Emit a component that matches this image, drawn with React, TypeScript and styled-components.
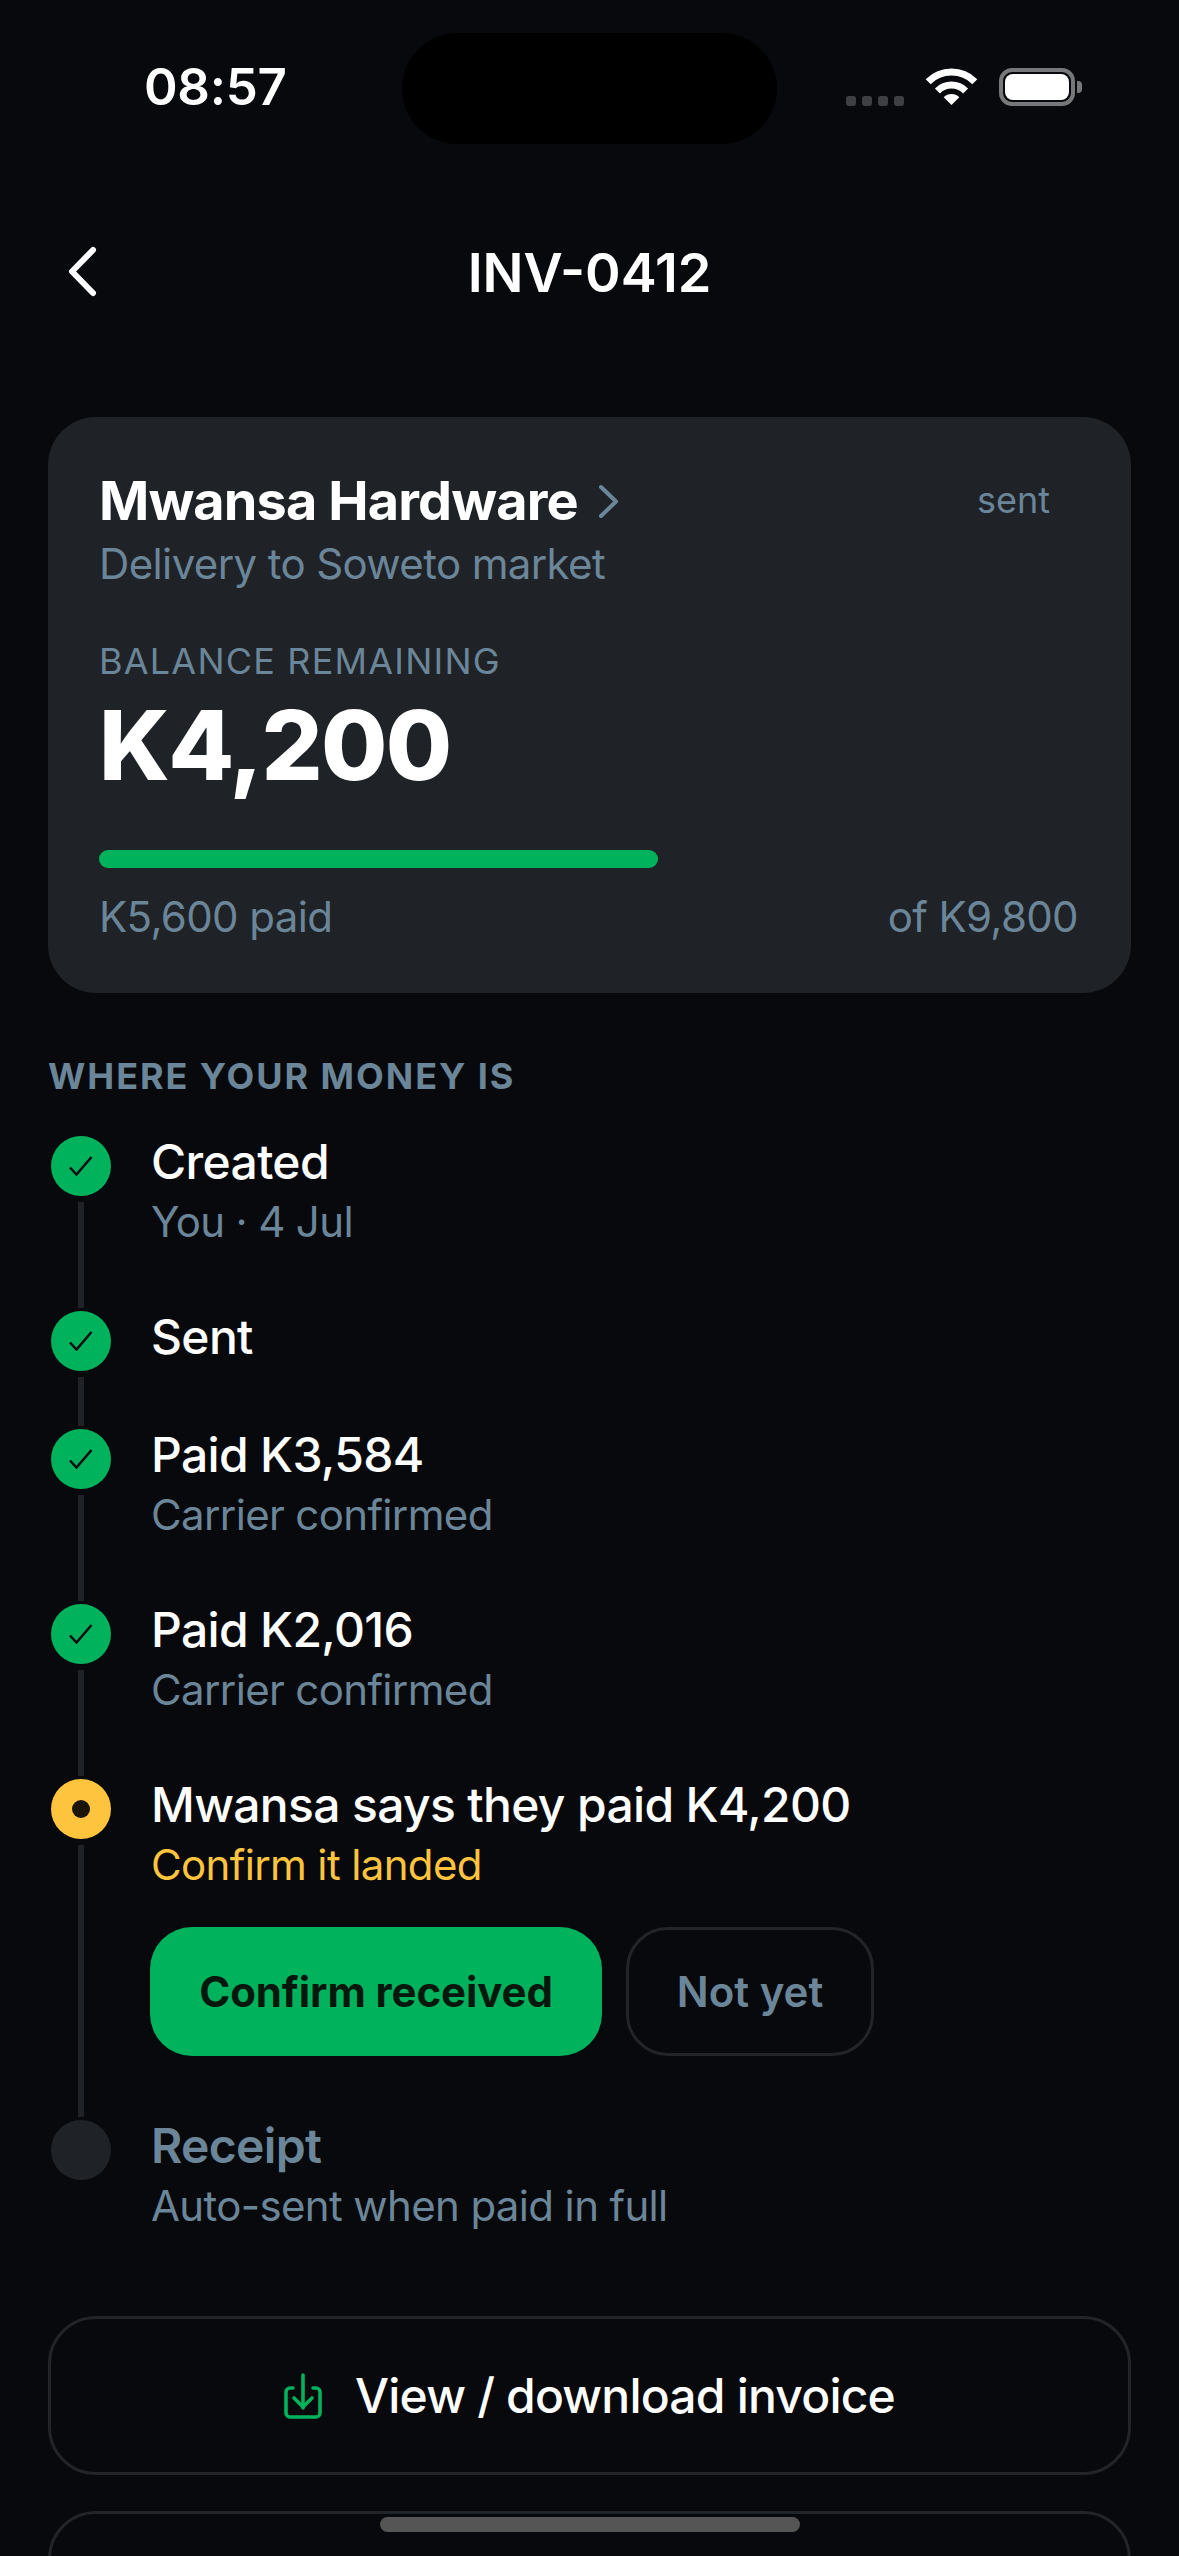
import React from 'react';
import styled, { createGlobalStyle } from 'styled-components';

type StepState = 'done' | 'active' | 'future';

interface Step {
  title: string;
  note?: string;
  state: StepState;
}

const STEPS: Step[] = [
  { title: 'Created', note: 'You · 4 Jul', state: 'done' },
  { title: 'Sent', state: 'done' },
  { title: 'Paid K3,584', note: 'Carrier confirmed', state: 'done' },
  { title: 'Paid K2,016', note: 'Carrier confirmed', state: 'done' },
  { title: 'Mwansa says they paid K4,200', note: 'Confirm it landed', state: 'active' },
  { title: 'Receipt', note: 'Auto-sent when paid in full', state: 'future' },
];

const GREEN = '#00b25c';
const AMBER = '#ffc43d';
const MUTED = '#6b8599';
const SURFACE = '#1f2327';
const EDGE = '#212429';
const BG = '#08090c';

const GlobalStyle = createGlobalStyle`
  html, body {
    margin: 0;
    padding: 0;
    width: 1179px;
    height: 2556px;
    overflow: hidden;
    background: ${BG};
  }
  * { box-sizing: border-box; }
`;

const Screen = styled.div`
  position: relative;
  width: 1179px;
  height: 2556px;
  overflow: hidden;
  background: ${BG};
  color: #fff;
  font-family: Inter, 'Liberation Sans', sans-serif;
`;

const StatusBar = styled.div`
  position: relative;
  height: 174px;
  display: flex;
  justify-content: space-between;
  padding: 59px 104px 0 144px;
`;

const Time = styled.div`
  font-size: 51px;
  line-height: 56px;
  font-weight: 600;
  letter-spacing: -0.3px;
`;

const Island = styled.div`
  position: absolute;
  left: 402px;
  top: 33px;
  width: 375px;
  height: 111px;
  border-radius: 56px;
  background: #000;
`;

const StatusIcons = styled.div`
  display: flex;
  align-items: flex-end;
  height: 38px;
  margin-top: 9px;
`;

const SignalDots = styled.div`
  display: flex;
  gap: 6px;
  margin-right: 23px;
`;

const SignalDot = styled.span`
  width: 10px;
  height: 10px;
  border-radius: 3px;
  background: #3f4043;
`;

const Battery = styled.div`
  position: relative;
  width: 76px;
  height: 38px;
  margin-left: 23px;
  padding: 2px;
  border: 4px solid #77787a;
  border-radius: 13px;
  &::after {
    content: '';
    position: absolute;
    right: -11px;
    top: 9px;
    width: 5px;
    height: 12px;
    border-radius: 0 4px 4px 0;
    background: #77787a;
  }
`;

const BatteryFill = styled.div`
  width: 100%;
  height: 100%;
  border-radius: 8px;
  background: #fff;
`;

const Header = styled.header`
  position: relative;
  height: 198px;
  display: flex;
  align-items: center;
  justify-content: center;
`;

const BackButton = styled.div`
  position: absolute;
  left: 66px;
  top: 72px;
  display: flex;
`;

const Title = styled.h1`
  margin: 0;
  font-size: 54px;
  line-height: 66px;
  font-weight: 600;
`;

const Content = styled.main`
  padding: 45px 48px 0;
`;

const Card = styled.section`
  height: 576px;
  padding: 51px 53px 0 51px;
  border-radius: 48px;
  background: ${SURFACE};
`;

const CardTop = styled.div`
  display: flex;
  justify-content: space-between;
  align-items: center;
`;

const Customer = styled.div`
  display: flex;
  align-items: center;
  gap: 20px;
  font-size: 54px;
  line-height: 66px;
  font-weight: 700;
  letter-spacing: -0.87px;
`;

const StatusTag = styled.span`
  margin-top: -2px;
  padding-right: 28px;
  font-size: 36px;
  line-height: 48px;
  color: ${MUTED};
`;

const CardNote = styled.div`
  margin-top: 1px;
  font-size: 42px;
  line-height: 58px;
  letter-spacing: -0.62px;
  color: ${MUTED};
`;

const BalanceLabel = styled.div`
  margin-top: 45px;
  font-size: 36px;
  line-height: 46px;
  letter-spacing: 1.2px;
  color: ${MUTED};
`;

const BalanceAmount = styled.div`
  margin-top: 5px;
  font-size: 96px;
  line-height: 112px;
  font-weight: 800;
  letter-spacing: -1.7px;
`;

const Track = styled.div`
  height: 18px;
  margin-top: 49px;
  border-radius: 9px;
`;

const TrackFill = styled.div`
  height: 100%;
  border-radius: 9px;
  background: ${GREEN};
`;

const BarLabels = styled.div`
  display: flex;
  justify-content: space-between;
  margin-top: 21px;
  font-size: 42px;
  line-height: 56px;
  letter-spacing: -0.62px;
  color: ${MUTED};
`;

const SectionLabel = styled.h2`
  margin: 60px 0 0;
  font-size: 36px;
  line-height: 46px;
  font-weight: 700;
  letter-spacing: 1.95px;
  color: ${MUTED};
`;

const Timeline = styled.div`
  margin-top: 37px;
  padding-left: 3px;
`;

const StepRow = styled.div`
  display: flex;
  gap: 40px;
`;

const Rail = styled.div`
  display: flex;
  flex-direction: column;
  align-items: center;
  width: 60px;
`;

const Marker = styled.div<{ $state: StepState }>`
  flex: none;
  display: flex;
  align-items: center;
  justify-content: center;
  width: 60px;
  height: 60px;
  border-radius: 50%;
  background: ${(p) =>
    p.$state === 'done' ? GREEN : p.$state === 'active' ? AMBER : SURFACE};
`;

const MarkerDot = styled.span`
  width: 18px;
  height: 18px;
  border-radius: 50%;
  background: #1a1508;
`;

const RailLine = styled.div`
  flex: 1;
  width: 6px;
  margin: 6px 0 3px;
  background: ${SURFACE};
`;

const StepBody = styled.div<{ $last: boolean }>`
  margin-top: -4px;
  padding-bottom: ${(p) => (p.$last ? 0 : 62)}px;
`;

const StepTitle = styled.div<{ $state: StepState }>`
  font-size: 48px;
  line-height: 60px;
  font-weight: ${(p) => (p.$state === 'future' ? 600 : 550)};
  letter-spacing: -0.66px;
  color: ${(p) => (p.$state === 'future' ? MUTED : '#fff')};
`;

const StepNote = styled.div<{ $state: StepState }>`
  padding-top: 2px;
  font-size: 42px;
  line-height: 55px;
  letter-spacing: -0.64px;
  color: ${(p) => (p.$state === 'active' ? AMBER : MUTED)};
`;

const StepActions = styled.div`
  display: flex;
  gap: 24px;
  margin: 35px 0 2px -1px;
`;

const ConfirmButton = styled.button`
  width: 452px;
  height: 129px;
  border: 0;
  border-radius: 42px;
  background: ${GREEN};
  color: #06170e;
  font: 700 42px Inter, sans-serif;
  letter-spacing: -0.1px;
`;

const DeclineButton = styled.button`
  width: 248px;
  height: 129px;
  border: 3px solid ${EDGE};
  border-radius: 42px;
  background: transparent;
  color: ${MUTED};
  font: 600 42px Inter, sans-serif;
`;

const WideButton = styled.button`
  display: flex;
  align-items: center;
  justify-content: center;
  gap: 33px;
  width: 100%;
  height: 159px;
  margin-top: 36px;
  border: 3px solid ${EDGE};
  border-radius: 48px;
  background: transparent;
  color: #fff;
  font: 550 48px Inter, sans-serif;
  letter-spacing: -0.8px;
`;

const WideButtons = styled.div`
  margin-top: 83px;
  & > button:first-child { margin-top: 0; }
`;

const HomeIndicator = styled.div`
  position: absolute;
  left: 380px;
  top: 2517px;
  width: 420px;
  height: 15px;
  border-radius: 8px;
  background: #555;
`;

const WifiIcon = () => (
  <svg width="49" height="38" viewBox="0 0 49 38" fill="none" style={{ overflow: 'visible' }}>
    <path d="M1.2 13.7A33 33 0 0 1 47.8 13.7" stroke="#fff" strokeWidth="7" />
    <path d="M10.4 22.9A20 20 0 0 1 38.6 22.9" stroke="#fff" strokeWidth="7" />
    <path d="M24.5 37L16.7 29.2A11 11 0 0 1 32.3 29.2Z" fill="#fff" />
  </svg>
);

const CheckIcon = () => (
  <svg width="24" height="20" viewBox="0 0 24 20" fill="none">
    <path d="M1 11.5L7.5 18.5L22.5 1" stroke="#0a0c0f" strokeWidth="2.5" />
  </svg>
);

const DownloadIcon = () => (
  <svg width="38" height="46" viewBox="0 0 38 46" fill="none" stroke={GREEN} strokeWidth="3.6" strokeLinecap="round" strokeLinejoin="round">
    <path d="M9 15H6a4 4 0 0 0-4 4v21a4 4 0 0 0 4 4h26a4 4 0 0 0 4-4V19a4 4 0 0 0-4-4h-3" />
    <path d="M19 2v33" />
    <path d="M10 25l9 9 9-9" />
  </svg>
);

export default function App() {
  const paid = 5600;
  const total = 9800;

  return (
    <Screen>
      <GlobalStyle />
      <StatusBar>
        <Time>08:57</Time>
        <Island />
        <StatusIcons>
          <SignalDots>
            {[0, 1, 2, 3].map((n) => (
              <SignalDot key={n} />
            ))}
          </SignalDots>
          <WifiIcon />
          <Battery>
            <BatteryFill />
          </Battery>
        </StatusIcons>
      </StatusBar>

      <Header>
        <BackButton>
          <svg width="33" height="51" viewBox="0 0 33 51" fill="none">
            <path d="M27 4L6 25.5L27 47" stroke="#fff" strokeWidth="6" strokeLinecap="round" strokeLinejoin="round" />
          </svg>
        </BackButton>
        <Title>INV-0412</Title>
      </Header>

      <Content>
        <Card>
          <CardTop>
            <Customer>
              Mwansa Hardware
              <svg width="21" height="35" viewBox="0 0 21 35" fill="none">
                <path d="M3 3L18 17.5L3 32" stroke={MUTED} strokeWidth="4" strokeLinecap="round" strokeLinejoin="round" />
              </svg>
            </Customer>
            <StatusTag>sent</StatusTag>
          </CardTop>
          <CardNote>Delivery to Soweto market</CardNote>
          <BalanceLabel>BALANCE REMAINING</BalanceLabel>
          <BalanceAmount>K4,200</BalanceAmount>
          <Track>
            <TrackFill style={{ width: `${(paid / total) * 100}%` }} />
          </Track>
          <BarLabels>
            <span>K5,600 paid</span>
            <span>of K9,800</span>
          </BarLabels>
        </Card>

        <SectionLabel>WHERE YOUR MONEY IS</SectionLabel>

        <Timeline>
          {STEPS.map((step, i) => {
            const last = i === STEPS.length - 1;
            return (
              <StepRow key={step.title}>
                <Rail>
                  <Marker $state={step.state}>
                    {step.state === 'done' && <CheckIcon />}
                    {step.state === 'active' && <MarkerDot />}
                  </Marker>
                  {!last && <RailLine />}
                </Rail>
                <StepBody $last={last}>
                  <StepTitle $state={step.state}>{step.title}</StepTitle>
                  {step.note && <StepNote $state={step.state}>{step.note}</StepNote>}
                  {step.state === 'active' && (
                    <StepActions>
                      <ConfirmButton>Confirm received</ConfirmButton>
                      <DeclineButton>Not yet</DeclineButton>
                    </StepActions>
                  )}
                </StepBody>
              </StepRow>
            );
          })}
        </Timeline>

        <WideButtons>
          <WideButton>
            <DownloadIcon />
            View / download invoice
          </WideButton>
          <WideButton />
        </WideButtons>
      </Content>

      <HomeIndicator />
    </Screen>
  );
}
